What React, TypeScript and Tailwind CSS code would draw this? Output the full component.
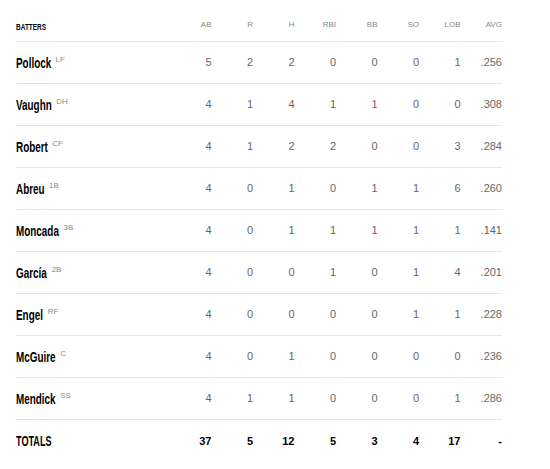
const batters = [
  { name: "Pollock", pos: "LF", ab: 5, r: 2, h: 2, rbi: 0, bb: 0, so: 0, lob: 1, avg: ".256" },
  { name: "Vaughn", pos: "DH", ab: 4, r: 1, h: 4, rbi: 1, bb: 1, so: 0, lob: 0, avg: ".308" },
  { name: "Robert", pos: "CF", ab: 4, r: 1, h: 2, rbi: 2, bb: 0, so: 0, lob: 3, avg: ".284" },
  { name: "Abreu", pos: "1B", ab: 4, r: 0, h: 1, rbi: 0, bb: 1, so: 1, lob: 6, avg: ".260" },
  { name: "Moncada", pos: "3B", ab: 4, r: 0, h: 1, rbi: 1, bb: 1, so: 1, lob: 1, avg: ".141" },
  { name: "García", pos: "2B", ab: 4, r: 0, h: 0, rbi: 1, bb: 0, so: 1, lob: 4, avg: ".201" },
  { name: "Engel", pos: "RF", ab: 4, r: 0, h: 0, rbi: 0, bb: 0, so: 1, lob: 1, avg: ".228" },
  { name: "McGuire", pos: "C", ab: 4, r: 0, h: 1, rbi: 0, bb: 0, so: 0, lob: 0, avg: ".236" },
  { name: "Mendick", pos: "SS", ab: 4, r: 1, h: 1, rbi: 0, bb: 0, so: 0, lob: 1, avg: ".286" },
];

const cols = ["AB", "R", "H", "RBI", "BB", "SO", "LOB", "AVG"];
const totals = ["37", "5", "12", "5", "3", "4", "17", "-"];

// no condensed face installed, so squeeze the bold sans sideways
const grid = "grid grid-cols-[154px_repeat(8,1fr)] items-center";

export default function App() {
  return (
    <div className="min-h-screen bg-white">
      <div className="ml-4 w-[486px] font-['Liberation_Sans',Arial,sans-serif]">
        <div className={`${grid} h-[42px] pt-[8px] border-b border-[#e6e6e6]`}>
          <div>
            <span className="inline-block origin-left scale-x-[0.72] text-[9px] font-bold leading-none text-black">
              BATTERS
            </span>
          </div>
          {cols.map((c) => (
            <div key={c} className="text-right text-[8px] text-[#888]">
              {c}
            </div>
          ))}
        </div>
        {batters.map((b) => (
          <div key={b.name} className={`${grid} h-[42px] border-b border-[#e6e6e6]`}>
            <div>
              <span className="inline-flex items-start origin-left scale-x-[0.66] whitespace-nowrap">
                <span className="text-[15px] font-bold leading-none text-black">{b.name}</span>
                <span className="ml-[7px] mt-[1px] inline-block origin-left scale-x-[1.5] text-[8px] leading-none text-[#8a8a8a]">
                  {b.pos}
                </span>
              </span>
            </div>
            {[b.ab, b.r, b.h, b.rbi, b.bb, b.so, b.lob, b.avg].map((v, i) => (
              <div key={i} className="text-right text-[11px] text-[#666]">
                {v}
              </div>
            ))}
          </div>
        ))}
        <div className={`${grid} h-[42px]`}>
          <div>
            <span className="inline-block origin-left scale-x-[0.65] text-[14px] font-bold leading-none text-black">
              TOTALS
            </span>
          </div>
          {totals.map((t, i) => (
            <div key={i} className="text-right text-[11px] font-bold text-black">
              {t}
            </div>
          ))}
        </div>
      </div>
    </div>
  );
}
